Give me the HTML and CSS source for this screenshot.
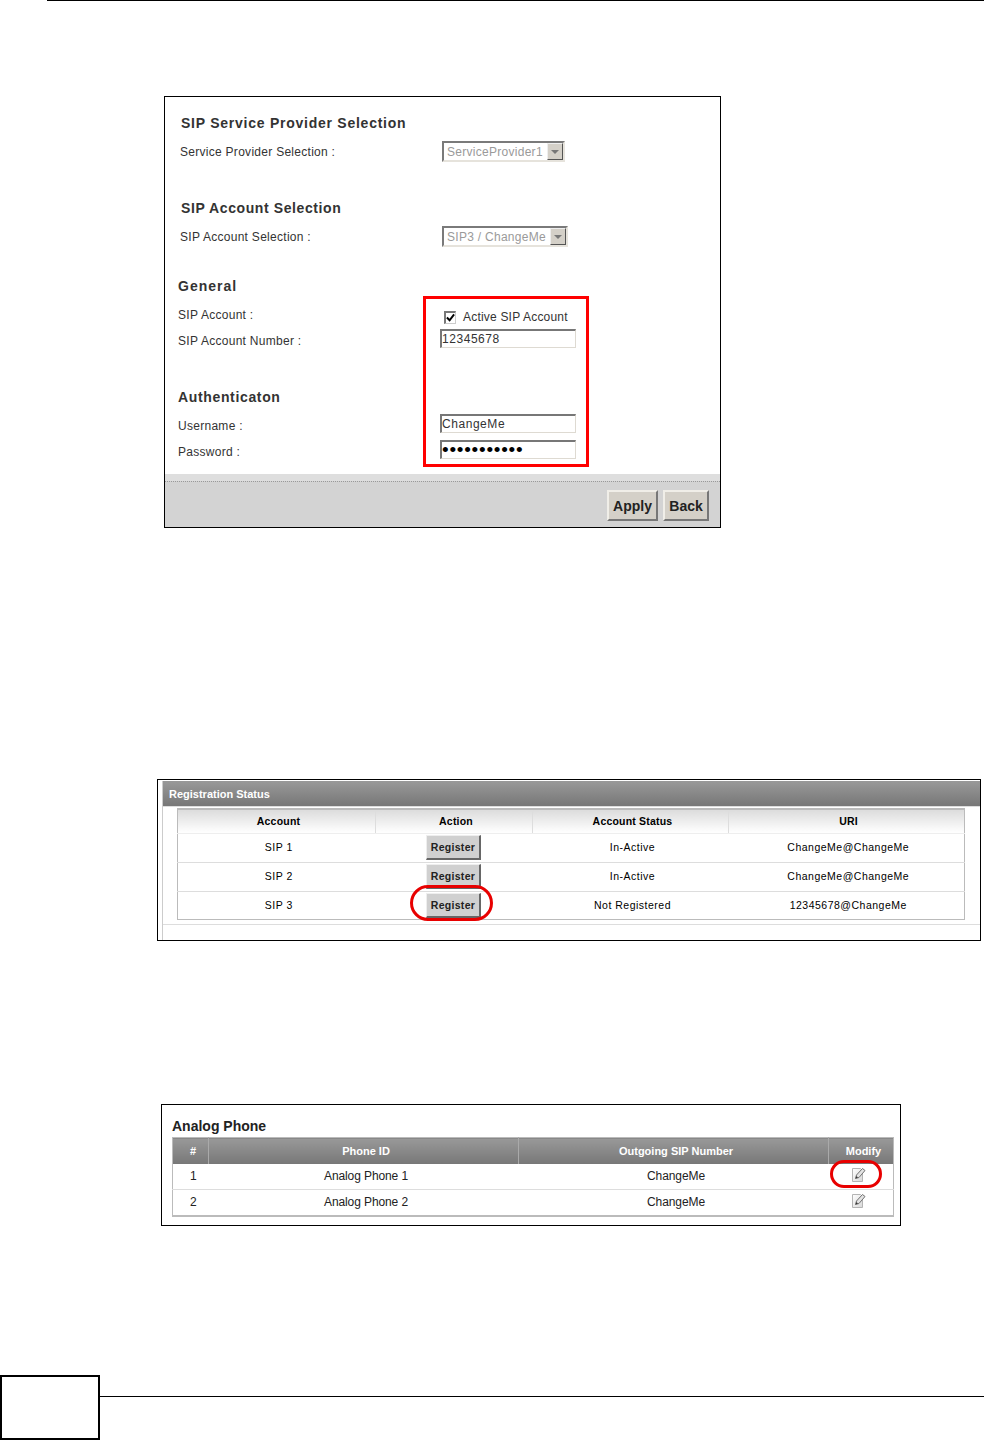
FILE: index.html
```html
<!DOCTYPE html>
<html lang="en">
<head>
<meta charset="utf-8">
<title>SIP Account Setup</title>
<link rel="stylesheet" href="styles.css">
</head>
<body>
<div class="page">
  <div class="top-rule"></div>

  <section class="fig fig-form">
    <div class="form-body">
      <h2 class="fh fh-a fh-1">SIP Service Provider Selection</h2>
      <div class="row row-a row-sel">
        <span class="lbl">Service Provider Selection :</span>
        <div class="sel sel-1"><span class="sel-text">ServiceProvider1</span><span class="sel-btn"><i class="tri"></i></span></div>
      </div>
      <h2 class="fh fh-a fh-2">SIP Account Selection</h2>
      <div class="row row-a row-sel">
        <span class="lbl">SIP Account Selection :</span>
        <div class="sel sel-2"><span class="sel-text">SIP3 / ChangeMe</span><span class="sel-btn"><i class="tri"></i></span></div>
      </div>
      <h2 class="fh fh-b fh-3">General</h2>
      <div class="row row-b row-active">
        <span class="lbl">SIP Account :</span>
        <div class="chk-wrap">
          <span class="chk"><svg width="10" height="10" viewBox="0 0 10 10"><path d="M1 4.5 L4 7.5 L9 1" fill="none" stroke="#000" stroke-width="2.2"/></svg></span>
          <span class="chk-lbl">Active SIP Account</span>
        </div>
      </div>
      <div class="row row-b row-num">
        <span class="lbl">SIP Account Number :</span>
        <input class="txt" type="text" value="12345678" aria-label="SIP Account Number">
      </div>
      <h2 class="fh fh-b fh-4">Authenticaton</h2>
      <div class="row row-b row-user">
        <span class="lbl">Username :</span>
        <input class="txt" type="text" value="ChangeMe" aria-label="Username">
      </div>
      <div class="row row-b row-pass">
        <span class="lbl">Password :</span>
        <input class="txt txt-pass" type="password" value="changeme123" aria-label="Password">
      </div>
    </div>
    <div class="form-foot">
      <button class="btn btn-apply" type="button">Apply</button>
      <button class="btn btn-back" type="button">Back</button>
    </div>
    <div class="red-box"></div>
  </section>

  <section class="fig fig-reg">
    <div class="reg-inner">
      <div class="reg-title">Registration Status</div>
      <table class="reg-table">
        <colgroup><col class="c1"><col class="c2"><col class="c3"><col class="c4"></colgroup>
        <thead>
          <tr><th>Account</th><th>Action</th><th>Account Status</th><th>URI</th></tr>
        </thead>
        <tbody>
          <tr class="r1"><td>SIP 1</td><td class="act"><button class="reg-btn" type="button">Register</button></td><td>In-Active</td><td>ChangeMe@ChangeMe</td></tr>
          <tr class="r2"><td>SIP 2</td><td class="act"><button class="reg-btn" type="button">Register</button></td><td>In-Active</td><td>ChangeMe@ChangeMe</td></tr>
          <tr class="r3"><td>SIP 3</td><td class="act"><button class="reg-btn" type="button">Register</button></td><td>Not Registered</td><td>12345678@ChangeMe</td></tr>
        </tbody>
      </table>
      <div class="reg-line"></div>
    </div>
    <div class="red-ring ring-reg"></div>
  </section>

  <section class="fig fig-phone">
    <h2 class="ph-title">Analog Phone</h2>
    <table class="ph-table">
      <colgroup><col class="p1"><col class="p2"><col class="p3"><col class="p4"></colgroup>
      <thead>
        <tr><th>#</th><th>Phone ID</th><th>Outgoing SIP Number</th><th>Modify</th></tr>
      </thead>
      <tbody>
        <tr>
          <td>1</td><td>Analog Phone 1</td><td>ChangeMe</td>
          <td class="ico"><svg class="edit" width="15" height="16" viewBox="0 0 15 16"><defs><linearGradient id="pg" x1="0" y1="0" x2="1" y2="1"><stop offset="0" stop-color="#fff"/><stop offset="1" stop-color="#d8d8d8"/></linearGradient></defs><path d="M1.5 1.5H9.5L11.5 3.5V14.5H1.5Z" fill="url(#pg)" stroke="#b4b4b4"/><path d="M4.5 11.5L5.5 8L11.5 1.5L14 3.5L8 10.5Z" fill="#e4e4e4" stroke="#707070"/><path d="M4.5 11.5L5.5 9L7 10.5Z" fill="#333"/></svg></td>
        </tr>
        <tr>
          <td>2</td><td>Analog Phone 2</td><td>ChangeMe</td>
          <td class="ico"><svg class="edit" width="15" height="16" viewBox="0 0 15 16"><path d="M1.5 1.5H9.5L11.5 3.5V14.5H1.5Z" fill="url(#pg)" stroke="#b4b4b4"/><path d="M4.5 11.5L5.5 8L11.5 1.5L14 3.5L8 10.5Z" fill="#e4e4e4" stroke="#707070"/><path d="M4.5 11.5L5.5 9L7 10.5Z" fill="#333"/></svg></td>
        </tr>
      </tbody>
    </table>
    <div class="red-ring ring-phone"></div>
  </section>

  <footer class="foot">
    <div class="foot-box"></div>
    <div class="foot-line"></div>
  </footer>
</div>
</body>
</html>
```

FILE: styles.css
```css
* { box-sizing: border-box; }
html, body { margin: 0; padding: 0; background: #fff; }
body { font-family: "Liberation Sans", Arial, sans-serif; color: #000; }

.page {
  width: 984px;
  height: 1440px;
  display: flex;
  flex-direction: column;
  overflow: hidden;
}

.top-rule { height: 1px; margin-left: 47px; background: #000; flex: none; }

.fig { position: relative; border: 1px solid #000; background: #fff; flex: none; }

/* Figure 1: form */
.fig-form {
  width: 557px;
  height: 432px;
  margin: 95px 0 0 164px;
  display: flex;
  flex-direction: column;
}
.form-body { height: 377px; display: flex; flex-direction: column; }

.fh {
  margin: 0;
  height: 20px;
  font-size: 14px;
  line-height: 20px;
  font-weight: bold;
  color: #333;
}
.fh-a { padding-left: 16px; }
.fh-b { padding-left: 13px; }
.fh-1 { margin-top: 16px; letter-spacing: 0.75px; }
.fh-2 { margin-top: 36px; letter-spacing: 0.6px; }
.fh-3 { margin-top: 29px; letter-spacing: 1px; }
.fh-4 { margin-top: 36px; letter-spacing: 0.65px; }

.row { display: flex; align-items: flex-start; height: 20px; }
.row-a { padding-left: 15px; margin-top: 9px; }
.row-b { padding-left: 13px; }
.row-active { margin-top: 9px; }
.row-num { margin-top: 4px; height: 22px; }
.row-user { margin-top: 9px; }
.row-pass { margin-top: 6px; }

.lbl {
  width: 262px;
  font-size: 12px;
  line-height: 20px;
  color: #333;
  letter-spacing: 0.28px;
}
.row-num .lbl { padding-top: 2px; }

.sel {
  display: flex;
  height: 21px;
  margin-top: -1px;
  border: 2px solid;
  border-color: #7a7a7a #e6e3dc #e6e3dc #7a7a7a;
  background: #fff;
}
.sel-1 { width: 123px; }
.sel-2 { width: 126px; }
.sel-text {
  flex: 1;
  padding-left: 3px;
  font-size: 12px;
  line-height: 19px;
  color: #9a9a9a;
  letter-spacing: 0.28px;
  white-space: nowrap;
}
.sel-btn {
  width: 16px;
  flex: none;
  display: flex;
  align-items: center;
  justify-content: center;
  background: #d4d0c8;
  border: 1px solid;
  border-color: #eee #555 #555 #eee;
}
.tri {
  width: 0; height: 0;
  border-left: 4px solid transparent;
  border-right: 4px solid transparent;
  border-top: 4px solid #777;
}

.chk-wrap { display: flex; align-items: center; height: 20px; margin-left: 4px; }
.row-active .chk-wrap { margin-top: 2px; }
.chk {
  width: 12px;
  height: 13px;
  border: 2px solid;
  border-color: #777 #ccc #ccc #777;
  border-right-width: 1px;
  border-bottom-width: 1px;
  background: #fff;
  display: flex;
  align-items: center;
  justify-content: center;
}
.chk-lbl {
  margin-left: 7px;
  font-size: 12px;
  color: #333;
  letter-spacing: 0.2px;
  white-space: nowrap;
}

.txt {
  display: block;
  width: 136px;
  height: 19px;
  margin: 0;
  padding: 0;
  border: 2px solid;
  border-color: #777 #dedad2 #dedad2 #777;
  border-right-width: 1px;
  border-bottom-width: 1px;
  outline: none;
  background: #fff;
  font-family: "Liberation Sans", Arial, sans-serif;
  font-size: 12px;
  letter-spacing: 0.55px;
  color: #333;
}
.txt-pass { font-size: 19px; letter-spacing: 0.75px; color: #000; }
.row-user .txt, .row-pass .txt { margin-top: -2px; }

.form-foot {
  height: 53px;
  display: flex;
  justify-content: flex-end;
  align-items: flex-start;
  gap: 5px;
  padding: 9px 11px 0 0;
  border-top: 7px solid #dedede;
  background-color: #d3d3d3;
  background-image: linear-gradient(90deg, #999 1px, transparent 1px);
  background-size: 2px 1px;
  background-repeat: repeat-x;
}

.btn {
  height: 31px;
  padding: 0;
  border: 2px solid;
  border-color: #f0eee8 #777 #777 #f0eee8;
  background: #d4d0c8;
  font-family: "Liberation Sans", Arial, sans-serif;
  font-weight: bold;
  font-size: 14px;
  color: #222;
}
.btn-apply { width: 51px; }
.btn-back { width: 46px; }

.red-box {
  position: absolute;
  left: 258px;
  top: 199px;
  width: 166px;
  height: 171px;
  border: 3px solid #f00;
}

/* Figure 2: registration */
.fig-reg {
  width: 824px;
  height: 162px;
  margin: 251px 0 0 157px;
  padding: 1px 0 0 4px;
}
.reg-inner { height: 159px; border-left: 1px solid #ccc; }
.reg-title {
  height: 26px;
  padding-left: 6px;
  background: linear-gradient(#999, #777);
  border-bottom: 1px solid #ddd;
  color: #fff;
  font-size: 11px;
  font-weight: bold;
  line-height: 27px;
}
.reg-table {
  table-layout: fixed;
  width: 787px;
  margin: 1px 0 0 14px;
  border-collapse: collapse;
  border: 1px solid #bbb;
  border-top-width: 2px;
  font-size: 10.5px;
}
.c1 { width: 198px; } .c2 { width: 157px; } .c3 { width: 196px; } .c4 { width: 236px; }
.reg-table th {
  height: 24px;
  padding: 0 0 0 4px;
  background: linear-gradient(#dcdcdc, #fff);
  border-right: 1px solid #ddd;
  border-bottom: 1px solid #eee;
  font-weight: bold;
  letter-spacing: 0.2px;
}
.reg-table th:last-child { border-right: 0; }
.reg-table td {
  padding: 0 0 0 4px;
  text-align: center;
  border-bottom: 1px solid #ddd;
  letter-spacing: 0.5px;
}
.reg-table .r1 td, .reg-table .r2 td { height: 29px; padding-bottom: 2px; }
.reg-table .r3 td { height: 28px; border-bottom: 0; }
.reg-table td.act, .reg-table .r1 td.act, .reg-table .r2 td.act { padding: 0 1px 0 0; }
.reg-btn {
  display: block;
  width: 55px;
  height: 25px;
  margin: 0 auto;
  padding: 0;
  border: 1px solid;
  border-color: #eee #666 #666 #eee;
  border-right-width: 2px;
  border-bottom-width: 2px;
  background: #d0d0d0;
  font-family: "Liberation Sans", Arial, sans-serif;
  font-size: 10.5px;
  font-weight: bold;
  letter-spacing: 0.3px;
  color: #222;
}
.reg-line { height: 1px; margin-top: 4px; background: #ddd; }

.red-ring { position: absolute; border: 3px solid #e80000; }
.ring-reg { left: 252px; top: 105px; width: 83px; height: 36px; border-radius: 18px; }

/* Figure 3: phones */
.fig-phone {
  width: 740px;
  height: 122px;
  margin: 163px 0 0 161px;
  padding: 0 7px 0 10px;
}
.ph-title {
  margin: 0;
  height: 32px;
  padding-top: 12px;
  font-size: 14px;
  line-height: 18px;
  font-weight: bold;
  color: #222;
}
.ph-table {
  table-layout: fixed;
  width: 721px;
  border-collapse: collapse;
  border: 1px solid #bbb;
  border-bottom-width: 2px;
  font-size: 12px;
}
.p1 { width: 36px; } .p2 { width: 310px; } .p3 { width: 310px; } .p4 { width: 65px; }
.ph-table th {
  height: 26px;
  padding: 0 0 0 5px;
  background: linear-gradient(#999, #777);
  color: #fff;
  font-weight: bold;
  font-size: 11px;
  border-right: 1px solid #aaa;
}
.ph-table th:last-child { border-right: 0; }
.ph-table td {
  height: 26px;
  padding: 0 0 0 5px;
  text-align: center;
  border-bottom: 1px solid #ddd;
  color: #222;
  letter-spacing: -0.1px;
}
.ph-table tr:last-child td { border-bottom: 0; }
.ph-table td.ico { line-height: 0; padding: 0 4px 3px 0; }
.edit { display: inline-block; vertical-align: middle; }
.ring-phone { left: 668px; top: 55px; width: 52px; height: 28px; border-radius: 14px; }

/* Footer */
.foot { margin-top: auto; height: 65px; display: flex; align-items: flex-start; flex: none; }
.foot-box { width: 100px; height: 65px; border: 2px solid #000; flex: none; }
.foot-line { flex: 1; height: 1px; margin-top: 21px; background: #000; }
```
